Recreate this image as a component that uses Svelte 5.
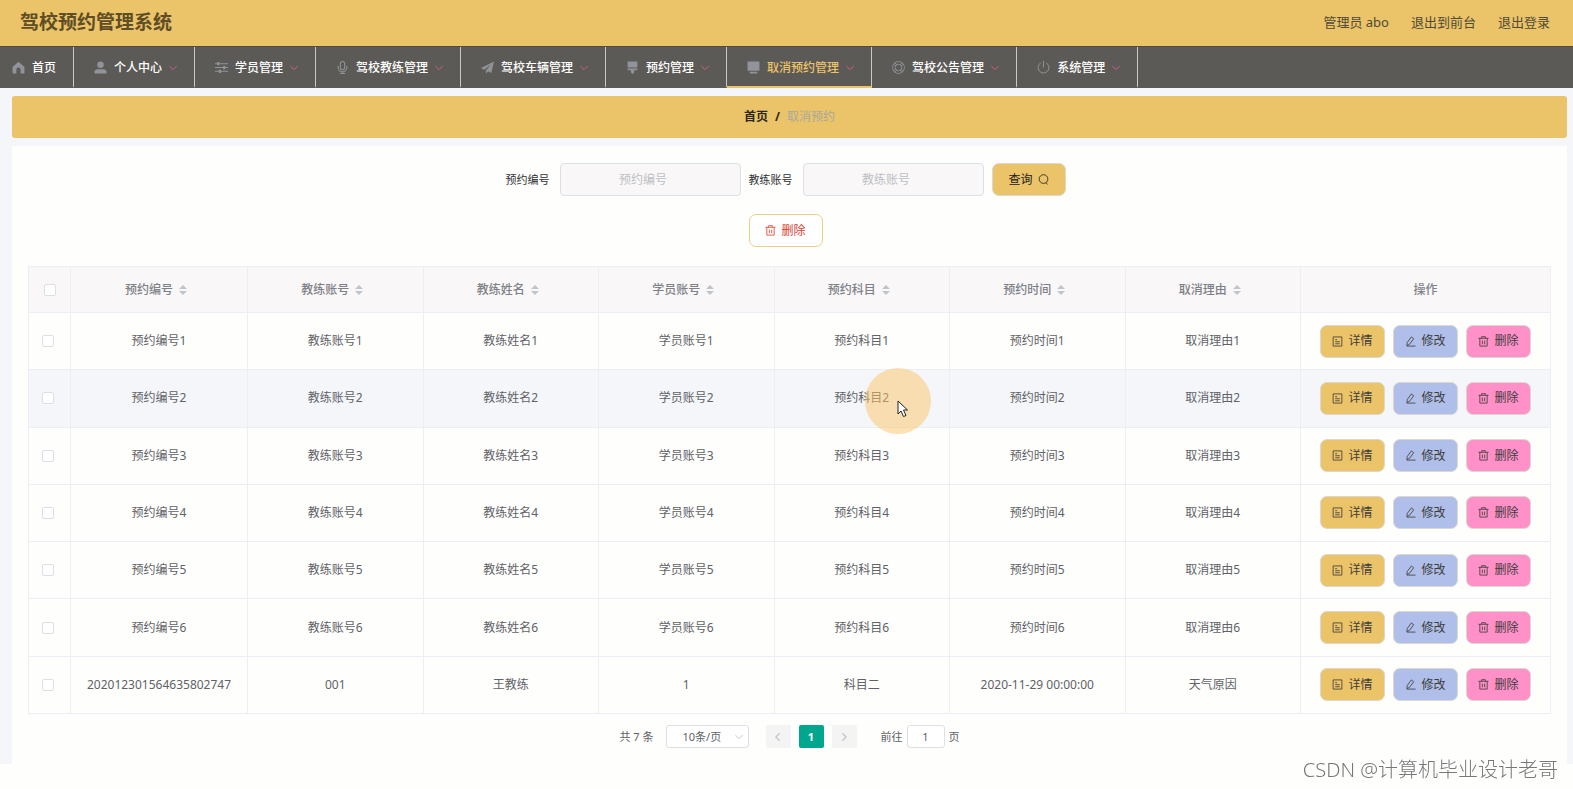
<script lang="ts">
  type NavItem = { label: string; icon: string; plain?: boolean; active?: boolean };

  const navItems: NavItem[] = [
    { label: '首页', icon: 'home', plain: true },
    { label: '个人中心', icon: 'user' },
    { label: '学员管理', icon: 'operation' },
    { label: '驾校教练管理', icon: 'mic' },
    { label: '驾校车辆管理', icon: 'plane' },
    { label: '预约管理', icon: 'brush' },
    { label: '取消预约管理', icon: 'monitor', active: true },
    { label: '驾校公告管理', icon: 'help' },
    { label: '系统管理', icon: 'power' }
  ];

  const columns = ['预约编号', '教练账号', '教练姓名', '学员账号', '预约科目', '预约时间', '取消理由'];

  const rows = [
    ...[1, 2, 3, 4, 5, 6].map((n) => columns.map((c) => c + n)),
    ['202012301564635802747', '001', '王教练', '1', '科目二', '2020-11-29 00:00:00', '天气原因']
  ];

  let orderNo = $state('');
  let coachNo = $state('');
  let jumpTo = $state('1');
  let checked = $state(rows.map(() => false));
  let allChecked = $derived(checked.every(Boolean));

  function toggleAll() {
    const next = !allChecked;
    checked = checked.map(() => next);
  }
</script>

{#snippet icon(name: string)}
  <svg class="icon" viewBox="0 0 24 24" aria-hidden="true">
    {#if name === 'home'}
      <path fill="currentColor" d="M12 1.5 23 11v12h-7v-7a4 4 0 0 0-8 0v7H1V11Z" />
    {:else if name === 'user'}
      <circle cx="12" cy="7" r="6" fill="currentColor" />
      <path fill="currentColor" d="M1 23v-3q0-5 6-5h10q6 0 6 5v3Z" />
    {:else if name === 'operation'}
      <path fill="none" stroke="currentColor" stroke-width="2" d="M0 5h24M0 12h24M0 19h24" />
      <path fill="none" stroke="currentColor" stroke-width="4" d="M6 2v6M17 9v6M9 16v6" />
    {:else if name === 'mic'}
      <rect x="8" y="1" width="8" height="15" rx="4" fill="none" stroke="currentColor" stroke-width="2" />
      <path fill="none" stroke="currentColor" stroke-width="2" d="M4 9v3a8 8 0 0 0 16 0V9M12 20v3M7 23h10" />
    {:else if name === 'plane'}
      <path fill="currentColor" d="M24 1 0 13l6 3L19 6 9 17.500v6l4-4.500 6 3Z" />
    {:else if name === 'brush'}
      <path fill="currentColor" d="M3 1h18v11H3ZM3 14h18v3h-6v4l-3 3-3-3v-4H3Z" />
    {:else if name === 'monitor'}
      <path fill="currentColor" d="M1 1h22v17H1ZM5 20h14v3H5Z" />
    {:else if name === 'help'}
      <g fill="none" stroke="currentColor" stroke-width="1.600">
        <circle cx="12" cy="12" r="11" />
        <circle cx="12" cy="12" r="6" />
        <path d="M5 3.500 9 7M19 3.500 15 7M5 20.500 9 17M19 20.500 15 17M3 6l4 3M21 6l-4 3M3 18l4-3M21 18l-4-3" />
      </g>
    {:else if name === 'power'}
      <path fill="none" stroke="currentColor" stroke-width="1.800" d="M12 0v12M7 3.500a10 10 0 1 0 10 0" />
    {:else if name === 'search'}
      <circle cx="12" cy="11" r="9.500" fill="none" stroke="currentColor" stroke-width="1.800" />
      <path fill="none" stroke="currentColor" stroke-width="1.800" d="m17 19 4 3.500" />
    {:else if name === 'trash'}
      <path fill="none" stroke="currentColor" stroke-width="1.800" d="M1 5h22M4 5v17h16V5M8 5V1.500h8V5M9.500 10v8M14.500 10v8" />
    {:else if name === 'tickets'}
      <path fill="none" stroke="currentColor" stroke-width="1.800" d="M2.500 2h19v20h-19ZM7 8h4M7 12.500h10M7 17h10" />
    {:else if name === 'edit'}
      <path fill="none" stroke="currentColor" stroke-width="1.800" d="M4 21 5 14 14 2l5 4-9 12ZM4 22h19" />
    {:else if name === 'down'}
      <path fill="none" stroke="currentColor" stroke-width="3" d="m1 6 11 11L23 6" />
    {:else if name === 'left'}
      <path fill="none" stroke="currentColor" stroke-width="3" d="M16 3 7 12l9 9" />
    {:else if name === 'right'}
      <path fill="none" stroke="currentColor" stroke-width="3" d="m8 3 9 9-9 9" />
    {/if}
  </svg>
{/snippet}

<div class="app" lang="zh-CN">
  <header class="header">
    <h1>驾校预约管理系统</h1>
    <div class="account">
      <span>管理员 abo</span>
      <a href="#front">退出到前台</a>
      <a href="#logout">退出登录</a>
    </div>
  </header>

  <nav class="nav">
    {#each navItems as item}
      <a href="#nav" class="nav-item" class:plain={item.plain} class:active={item.active}>
        {@render icon(item.icon)}
        <span>{item.label}</span>
        {#if !item.plain}
          <i class="arrow">{@render icon('down')}</i>
        {/if}
      </a>
    {/each}
  </nav>

  <main class="main">
    <div class="breadcrumb">
      <a href="#home">首页</a>
      <b>/</b>
      <span>取消预约</span>
    </div>

    <section class="card">
      <form class="search" onsubmit={(e) => e.preventDefault()}>
        <label for="order-no">预约编号</label>
        <input id="order-no" type="text" placeholder="预约编号" bind:value={orderNo} />
        <label for="coach-no">教练账号</label>
        <input id="coach-no" type="text" placeholder="教练账号" bind:value={coachNo} />
        <button class="btn query" type="submit">查询 {@render icon('search')}</button>
      </form>

      <div class="toolbar">
        <button class="btn remove" type="button">{@render icon('trash')} 删除</button>
      </div>

      <table>
        <colgroup>
          <col class="col-check" />
          <col class="col-first" />
          <col span="6" />
          <col class="col-ops" />
        </colgroup>
        <thead>
          <tr>
            <th><input type="checkbox" aria-label="全选" checked={allChecked} onchange={toggleAll} /></th>
            {#each columns as column}
              <th>
                <span class="sortable">
                  {column}
                  <svg class="caret" viewBox="0 0 8 10" aria-hidden="true">
                    <path fill="currentColor" d="M4 0 8 4H0ZM0 6h8L4 10Z" />
                  </svg>
                </span>
              </th>
            {/each}
            <th>操作</th>
          </tr>
        </thead>
        <tbody>
          {#each rows as row, i}
            <tr class:hovered={i === 1}>
              <td class="check"><input type="checkbox" aria-label={row[0]} bind:checked={checked[i]} /></td>
              {#each row as cell}
                <td>{cell}</td>
              {/each}
              <td>
                <div class="ops">
                  <button class="btn detail" type="button">{@render icon('tickets')} 详情</button>
                  <button class="btn edit" type="button">{@render icon('edit')} 修改</button>
                  <button class="btn delete" type="button">{@render icon('trash')} 删除</button>
                </div>
              </td>
            </tr>
          {/each}
        </tbody>
      </table>

      <div class="pagination">
        <span class="total">共 7 条</span>
        <div class="size">
          <select aria-label="每页条数">
            <option>10条/页</option>
            <option>20条/页</option>
            <option>50条/页</option>
          </select>
          {@render icon('down')}
        </div>
        <div class="pager">
          <button type="button" aria-label="上一页" disabled>{@render icon('left')}</button>
          <button type="button" class="current">1</button>
          <button type="button" aria-label="下一页" disabled>{@render icon('right')}</button>
        </div>
        <label class="jump">前往 <input type="text" bind:value={jumpTo} /> 页</label>
      </div>
    </section>
  </main>

  <div class="pointer">
    <svg viewBox="0 0 12 18" aria-hidden="true">
      <path fill="#fff" stroke="#222" d="M1 1v13l3-3 2.500 5.500 2.500-1L6.500 10H10.500Z" />
    </svg>
  </div>

  <div class="watermark">CSDN @计算机毕业设计老哥</div>
</div>

<style>
  :global(body) {
    background: #fefefd;
  }

  .app {
    position: relative;
    font-family: 'Noto Sans', 'Noto Sans CJK SC', sans-serif;
    font-size: 12px;
    line-height: 16px;
    color: #606266;
  }

  .app * {
    box-sizing: border-box;
  }

  a {
    color: inherit;
    text-decoration: none;
  }

  button,
  input,
  select {
    font: inherit;
    color: inherit;
  }

  .icon {
    width: 12px;
    height: 12px;
    flex: none;
  }

  .header {
    display: flex;
    align-items: center;
    justify-content: space-between;
    height: 46px;
    padding: 0 23px 2px 20px;
    background: #ebc369;
  }

  h1 {
    margin: 0;
    font-size: 19px;
    line-height: 28px;
    font-weight: 700;
    color: #5e4d25;
  }

  .account {
    display: flex;
    gap: 22px;
    font-size: 13px;
    color: #4f4a38;
  }

  .nav {
    display: flex;
    height: 42px;
    background: #5c5a56;
    border-top: 1px solid #514b43;
  }

  .nav-item {
    display: flex;
    align-items: center;
    gap: 7px;
    padding: 2px 17px 0 20px;
    border-right: 1px solid #c9c9c7;
    border-bottom: 2px solid transparent;
    color: #fff;
    font-weight: 500;
    white-space: nowrap;
  }

  .nav-item .icon {
    width: 13px;
    height: 13px;
    color: #909399;
  }

  .nav-item.plain {
    padding: 2px 17px 0 12px;
  }

  .nav-item.active {
    color: #ebc369;
    border-bottom-color: #ebc369;
  }

  .arrow {
    display: flex;
  }

  .nav-item .arrow .icon {
    width: 8px;
    height: 8px;
    color: #cf5f88;
  }

  .main {
    padding: 8px 6px 0 12px;
    background: #f5f6fa;
  }

  .breadcrumb {
    display: flex;
    align-items: center;
    justify-content: center;
    gap: 7px;
    height: 42px;
    margin-bottom: 8px;
    border-radius: 3px;
    background: #ebc369;
    color: #a9a99f;
  }

  .breadcrumb a,
  .breadcrumb b {
    font-weight: 700;
    color: #2b2720;
  }

  .card {
    padding: 17px 16px 16px;
    background: #fefefd;
  }

  .search,
  .toolbar {
    display: flex;
    align-items: center;
    justify-content: center;
    padding-right: 8px;
  }

  .search label {
    padding-right: 10px;
    font-size: 11px;
    color: #303133;
  }

  .search input {
    width: 181px;
    height: 33px;
    margin-right: 8px;
    padding: 0 26px 0 12px;
    border: 1px solid #dcdfe6;
    border-radius: 4px;
    background: #f9f7f7;
    text-align: center;
    outline: none;
  }

  .search input::placeholder {
    color: #bcbfc6;
  }

  .btn {
    display: inline-flex;
    align-items: center;
    justify-content: center;
    gap: 5px;
    width: 65px;
    height: 33px;
    padding: 0;
    border: 1px solid #dcd8d0;
    border-radius: 7px;
    color: #3f3d3a;
    white-space: nowrap;
    cursor: pointer;
  }

  .btn .icon {
    width: 11px;
    height: 11px;
  }

  .query,
  .remove {
    width: 74px;
  }

  .query,
  .detail {
    background: #ebc369;
  }

  .query {
    color: #222;
  }

  .remove {
    background: #fff;
    border-color: #ebcf85;
    color: #d9412f;
  }

  .edit {
    background: #afbfe9;
  }

  .delete {
    background: #ff90c8;
  }

  .toolbar {
    margin: 18px 0 19px;
  }

  table {
    width: 100%;
    height: 448px;
    table-layout: fixed;
    border-collapse: collapse;
    text-align: center;
  }

  .col-check {
    width: 42px;
  }

  .col-first {
    width: 177px;
  }

  .col-ops {
    width: 250px;
  }

  th,
  td {
    height: 57px;
    padding: 0;
    border: 1px solid #ebeef5;
  }

  th {
    height: 46px;
    background: #f9f7f7;
    color: #7e8187;
    font-weight: 500;
  }

  td.check {
    padding-right: 3px;
  }

  .hovered td {
    background: #f4f6fa;
  }

  .sortable {
    display: inline-flex;
    align-items: center;
    gap: 6px;
    padding-right: 6px;
  }

  .caret {
    width: 8px;
    height: 10px;
    color: #c0c4cc;
  }

  input[type='checkbox'] {
    appearance: none;
    display: block;
    width: 12px;
    height: 12px;
    margin: 0 auto;
    border: 1px solid #dcdfe6;
    border-radius: 2px;
    background: #fff;
  }

  input[type='checkbox']:checked {
    background: #00a78e;
    border-color: #00a78e;
  }

  .ops {
    display: flex;
    justify-content: center;
    gap: 8px;
  }

  .pagination {
    display: flex;
    align-items: center;
    justify-content: center;
    margin-top: 11px;
    font-size: 11px;
  }

  .size {
    position: relative;
    margin: 0 17px 0 12px;
  }

  .size select {
    appearance: none;
    display: block;
    width: 83px;
    height: 23px;
    padding: 0 16px;
    border: 1px solid #dcdfe6;
    border-radius: 3px;
    background: #fff;
  }

  .size .icon {
    position: absolute;
    top: 8px;
    right: 6px;
    width: 8px;
    height: 8px;
    color: #c0c4cc;
    pointer-events: none;
  }

  .pager {
    display: flex;
    gap: 8px;
    margin-right: 24px;
  }

  .pager button {
    display: flex;
    align-items: center;
    justify-content: center;
    width: 25px;
    height: 23px;
    padding: 0;
    border: 0;
    border-radius: 2px;
    background: #f4f4f5;
    color: #c0c4cc;
  }

  .pager .icon {
    width: 10px;
    height: 10px;
  }

  .pager .current {
    background: #00a78e;
    color: #fff;
    font-weight: 700;
  }

  .jump {
    display: flex;
    align-items: center;
    gap: 4px;
  }

  .jump input {
    width: 38px;
    height: 23px;
    padding: 0;
    border: 1px solid #dcdfe6;
    border-radius: 3px;
    background: #fff;
    text-align: center;
  }

  .pointer {
    position: absolute;
    top: 368px;
    left: 865px;
    width: 66px;
    height: 66px;
    border-radius: 50%;
    background: rgba(252, 196, 104, 0.5);
    pointer-events: none;
  }

  .pointer svg {
    position: absolute;
    top: 32px;
    left: 32px;
    width: 12px;
    height: 18px;
  }

  .watermark {
    position: fixed;
    right: 15px;
    bottom: 5px;
    font-size: 20px;
    line-height: 28px;
    font-weight: 300;
    color: #777;
    text-shadow: -1px -1px 0 #fff;
    pointer-events: none;
  }
</style>
